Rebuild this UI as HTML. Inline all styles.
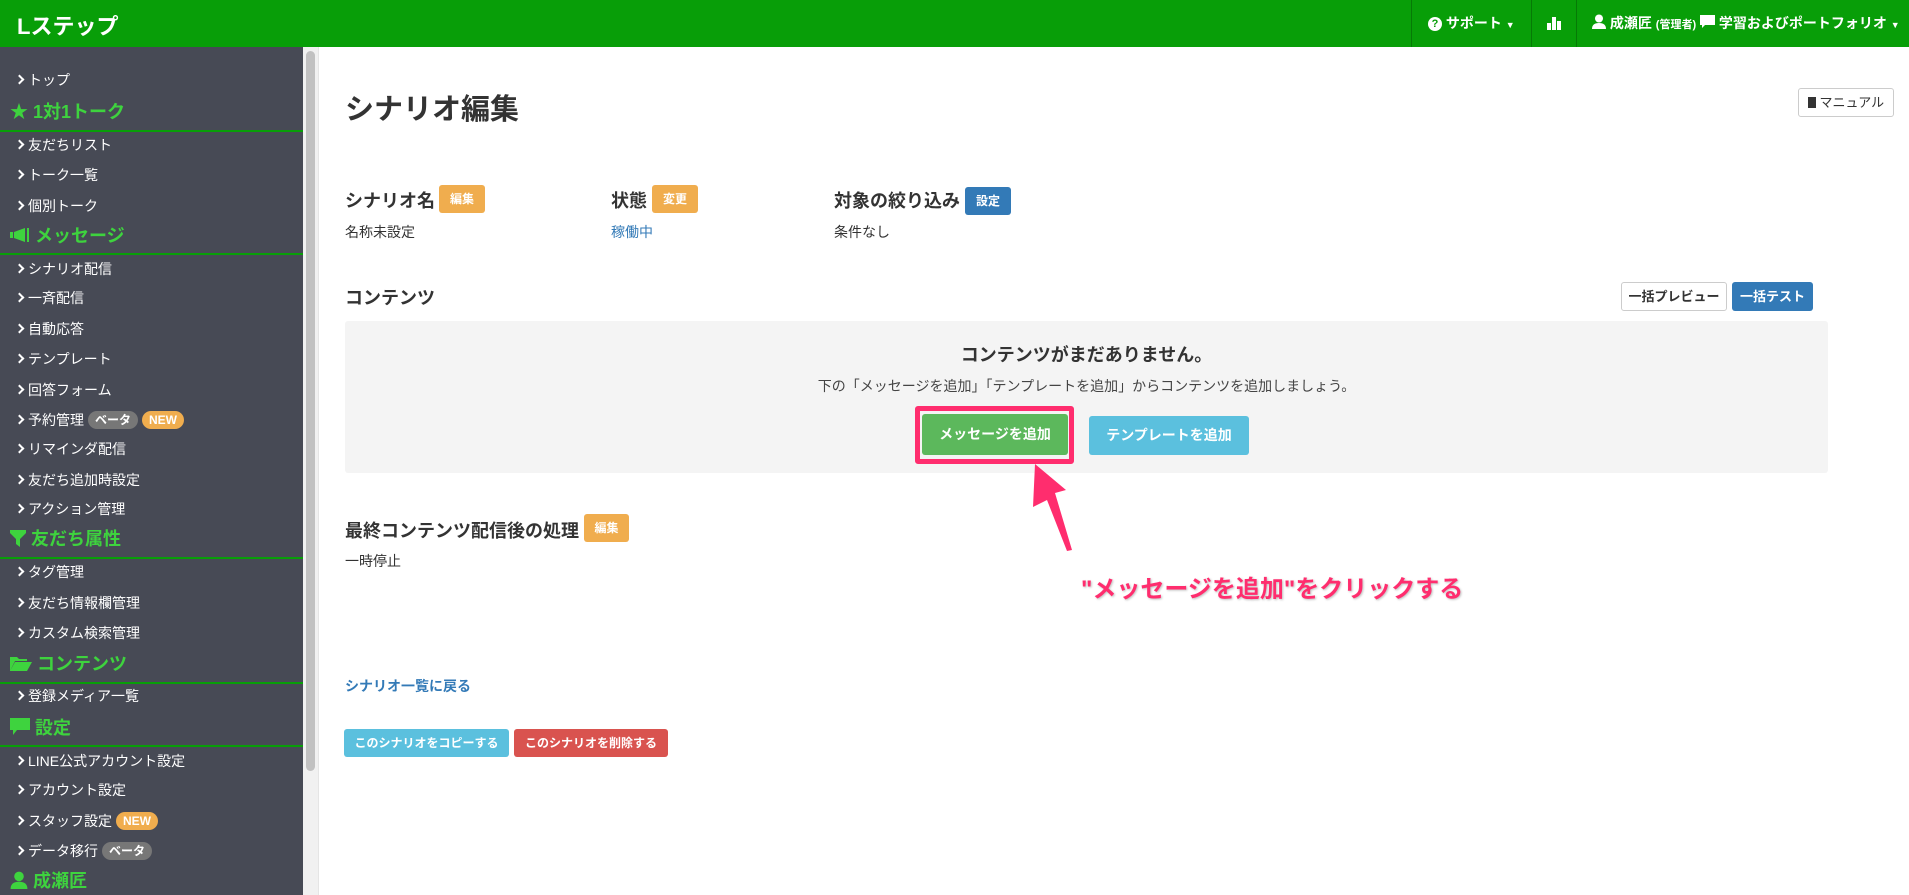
<!DOCTYPE html>
<html><head><meta charset="utf-8"><style>
*{box-sizing:border-box;margin:0;padding:0}
body{width:1909px;height:895px;overflow:hidden;background:#fff;font-family:"Liberation Sans","Noto Sans CJK JP",sans-serif;color:#333;position:relative}
.abs{position:absolute;white-space:nowrap}
#hdr{position:absolute;left:0;top:0;width:1909px;height:47px;background:#089e08}
#side{position:absolute;left:0;top:47px;width:303px;height:848px;background:#474a55}
.it{position:absolute;left:16px;color:#fff;font-size:14px;line-height:20px;transform:translateY(-10px)}
.it:before{content:"";display:inline-block;width:5px;height:5px;border-right:2px solid #fff;border-top:2px solid #fff;transform:rotate(45deg);margin:0 5px 2px 0}
.sec{position:absolute;left:10px;color:#3ed33e;font-size:18px;font-weight:bold;line-height:22px;transform:translateY(-11px)}
.ln{position:absolute;left:0;width:303px;height:2px;background:#089e08}
.pill{display:inline-block;font-size:12px;font-weight:bold;color:#fff;border-radius:9px;padding:0 7px;line-height:18px;margin-left:4px;vertical-align:1px}
.btn{position:absolute;color:#fff;font-size:14px;font-weight:bold;text-align:center;border-radius:3px}
.bdg{position:absolute;color:#fff;font-size:12px;font-weight:bold;text-align:center;border-radius:3px;background:#f0ad4e}
h3{position:absolute;font-size:18px;font-weight:bold;color:#333;white-space:nowrap}
.hv{position:absolute;color:#fff;font-size:14px;font-weight:bold;top:13px;white-space:nowrap}
.sep{position:absolute;top:0;width:1px;height:47px;background:#067a06}
</style></head><body>
<div id="hdr">
<div class="abs" style="left:17px;top:9px;color:#fff;font-size:22px;font-weight:bold">Lステップ</div>
<div class="sep" style="left:1411px"></div><div class="sep" style="left:1531px"></div><div class="sep" style="left:1576px"></div>
<div class="hv" style="left:1428px"><span style="display:inline-block;width:14px;height:14px;border-radius:7px;background:#fff;color:#089e08;font-size:11px;text-align:center;line-height:14px;vertical-align:1px">?</span> サポート <span style="font-size:9px">▼</span></div>
<div class="abs" style="left:1547px;top:16px;width:14px;height:14px"><div style="position:absolute;left:0;bottom:0;width:4px;height:7px;background:#fff"></div><div style="position:absolute;left:5px;bottom:0;width:4px;height:13px;background:#fff"></div><div style="position:absolute;left:10px;bottom:0;width:4px;height:9px;background:#fff"></div></div>
<div class="hv" style="left:1592px"><svg width="14" height="15" viewBox="0 0 14 15" style="vertical-align:-1px"><circle cx="7" cy="4.5" r="4" fill="#fff"/><path d="M0 15 Q0 9 7 9 Q14 9 14 15Z" fill="#fff"/></svg> 成瀬匠 <span style="font-size:11px">(管理者)</span> <svg width="15" height="14" viewBox="0 0 15 14" style="vertical-align:-1px"><path d="M0 0H15V10H5L2 13V10H0Z" fill="#fff"/></svg> 学習およびポートフォリオ <span style="font-size:9px">▼</span></div>
</div>
<div id="side">
<div style="position:absolute;left:303px;top:0;width:15px;height:848px;background:#f1f1f1"></div>
<div style="position:absolute;left:306px;top:4px;width:9px;height:720px;background:#c1c1c1;border-radius:5px"></div>
</div>
<div style="position:absolute;left:318px;top:47px;width:1px;height:848px;background:#e5e5e5"></div>
<div class="it" style="top:80px">トップ</div>
<div class="sec" style="top:112px">★ 1対1トーク</div><div class="ln" style="top:130px"></div>
<div class="it" style="top:145px">友だちリスト</div>
<div class="it" style="top:175px">トーク一覧</div>
<div class="it" style="top:206px">個別トーク</div>
<div class="sec" style="top:236px"><svg width="20" height="16" viewBox="0 0 20 16" style="vertical-align:-1px"><path d="M0 5H3V11H0Z M4 5L15 1V15L4 11Z M17 1H19V15H17Z" fill="#3ed33e"/></svg> メッセージ</div><div class="ln" style="top:253px"></div>
<div class="it" style="top:269px">シナリオ配信</div>
<div class="it" style="top:298px">一斉配信</div>
<div class="it" style="top:329px">自動応答</div>
<div class="it" style="top:359px">テンプレート</div>
<div class="it" style="top:390px">回答フォーム</div>
<div class="it" style="top:420px">予約管理<span class="pill" style="background:#777">ベータ</span><span class="pill" style="background:#f0ad4e">NEW</span></div>
<div class="it" style="top:449px">リマインダ配信</div>
<div class="it" style="top:480px">友だち追加時設定</div>
<div class="it" style="top:509px">アクション管理</div>
<div class="sec" style="top:539px"><svg width="16" height="17" viewBox="0 0 16 17" style="vertical-align:-2px"><path d="M0 0H16V3L10 9V17L6 14V9L0 3Z" fill="#3ed33e"/></svg> 友だち属性</div><div class="ln" style="top:557px"></div>
<div class="it" style="top:572px">タグ管理</div>
<div class="it" style="top:603px">友だち情報欄管理</div>
<div class="it" style="top:633px">カスタム検索管理</div>
<div class="sec" style="top:664px"><svg width="22" height="16" viewBox="0 0 22 16" style="vertical-align:-1px"><path d="M0 2H7L9 4H17V6H5L0 16Z M5 7H22L17 16H0Z" fill="#3ed33e"/></svg> コンテンツ</div><div class="ln" style="top:682px"></div>
<div class="it" style="top:696px">登録メディア一覧</div>
<div class="sec" style="top:728px"><svg width="20" height="18" viewBox="0 0 20 18" style="vertical-align:-2px"><path d="M0 0H20V12H7L3 17V12H0Z" fill="#3ed33e"/></svg> 設定</div><div class="ln" style="top:745px"></div>
<div class="it" style="top:761px">LINE公式アカウント設定</div>
<div class="it" style="top:790px">アカウント設定</div>
<div class="it" style="top:821px">スタッフ設定<span class="pill" style="background:#f0ad4e">NEW</span></div>
<div class="it" style="top:851px">データ移行<span class="pill" style="background:#777">ベータ</span></div>
<div class="sec" style="top:881px"><svg width="18" height="18" viewBox="0 0 14 15" style="vertical-align:-2px"><circle cx="7" cy="4.5" r="4" fill="#3ed33e"/><path d="M0 15 Q0 9 7 9 Q14 9 14 15Z" fill="#3ed33e"/></svg> 成瀬匠</div>

<div class="abs" style="left:345px;top:86px;font-size:29px;font-weight:bold;color:#333">シナリオ編集</div>
<div class="abs" style="left:1798px;top:88px;width:96px;height:29px;border:1px solid #ccc;border-radius:3px;font-size:13px;line-height:27px;text-align:center;color:#333"><span style="display:inline-block;width:8px;height:11px;background:#333;vertical-align:-1px"></span> マニュアル</div>

<h3 style="left:345px;top:187px">シナリオ名</h3><div class="bdg" style="left:439px;top:185px;width:46px;height:28px;line-height:28px">編集</div>
<h3 style="left:611px;top:187px">状態</h3><div class="bdg" style="left:652px;top:185px;width:46px;height:28px;line-height:28px">変更</div>
<h3 style="left:834px;top:187px">対象の絞り込み</h3><div class="bdg" style="left:965px;top:187px;width:46px;height:28px;line-height:28px;background:#337ab7">設定</div>
<div class="abs" style="left:345px;top:222px;font-size:14px">名称未設定</div>
<div class="abs" style="left:611px;top:222px;font-size:14px;color:#337ab7">稼働中</div>
<div class="abs" style="left:834px;top:222px;font-size:14px">条件なし</div>

<h3 style="left:345px;top:284px">コンテンツ</h3>
<div class="btn" style="left:1621px;top:282px;width:106px;height:29px;line-height:27px;border:1px solid #ccc;color:#333;font-size:13px;background:#fff">一括プレビュー</div>
<div class="btn" style="left:1732px;top:282px;width:81px;height:29px;line-height:29px;background:#337ab7;font-size:13px">一括テスト</div>
<div style="position:absolute;left:345px;top:321px;width:1483px;height:152px;background:#f4f4f4;border-radius:3px"></div>
<div class="abs" style="left:345px;width:1483px;text-align:center;top:341px;font-size:18px;font-weight:bold">コンテンツがまだありません。</div>
<div class="abs" style="left:345px;width:1483px;text-align:center;top:376px;font-size:14px;color:#444">下の「メッセージを追加」「テンプレートを追加」からコンテンツを追加しましょう。</div>
<div style="position:absolute;left:915px;top:406px;width:159px;height:58px;border:5px solid #ff2d6e;border-radius:3px"></div>
<div class="btn" style="left:922px;top:414px;width:146px;height:41px;line-height:41px;background:#5cb85c">メッセージを追加</div>
<div class="btn" style="left:1089px;top:416px;width:160px;height:39px;line-height:39px;background:#5bc0de">テンプレートを追加</div>
<svg class="abs" style="left:0;top:0" width="1909" height="895"><path d="M1035 464 L1066 490 L1055 493 L1072 550 L1067 551 L1047 500 L1033 507 Z" fill="#ff2d6e"/></svg>
<div class="abs" style="left:1081px;top:569px;font-size:24px;font-weight:bold;color:#ff2d6e;text-shadow:1px 1px 2px rgba(0,0,0,.25)">"メッセージを追加"をクリックする</div>

<h3 style="left:345px;top:517px">最終コンテンツ配信後の処理</h3><div class="bdg" style="left:584px;top:514px;width:45px;height:28px;line-height:28px">編集</div>
<div class="abs" style="left:345px;top:551px;font-size:14px">一時停止</div>
<div class="abs" style="left:345px;top:676px;font-size:14px;color:#337ab7;font-weight:bold">シナリオ一覧に戻る</div>
<div class="btn" style="left:344px;top:729px;width:165px;height:28px;line-height:28px;background:#5bc0de;font-size:12px">このシナリオをコピーする</div>
<div class="btn" style="left:514px;top:729px;width:154px;height:28px;line-height:28px;background:#d9534f;font-size:12px">このシナリオを削除する</div>
</body></html>
